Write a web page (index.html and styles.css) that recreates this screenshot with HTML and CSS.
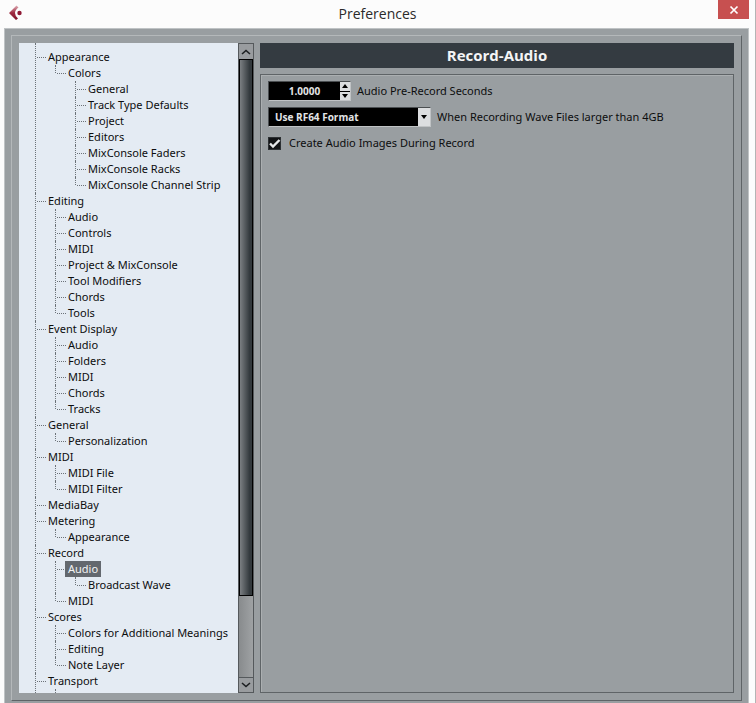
FILE: index.html
```html
<!DOCTYPE html>
<html lang="en">

<head>
    <meta charset="UTF-8">
    <meta name="viewport" content="width=device-width, initial-scale=1.0">
    <title>Preferences</title>
    <link rel="stylesheet" href="styles.css">
</head>

<body>
    <header class="titlebar">
        <svg class="logo" width="14" height="16" viewBox="0 0 14 16">
            <defs>
                <linearGradient id="red" x1="0" y1="0" x2="0" y2="1">
                    <stop offset="0" stop-color="#dfb0b8"/>
                    <stop offset="0.5" stop-color="#a02c42"/>
                    <stop offset="1" stop-color="#7d1026"/>
                </linearGradient>
            </defs>
            <path d="M7.500 0.500 L0 8 L7 15 L9 13.500 Q6 11 6 8 Q6 5 9.500 2.500 Z" fill="url(#red)"/>
            <circle cx="10.500" cy="8" r="2.200" fill="#8f1a35"/>
        </svg>
        <h1>Preferences</h1>
        <button class="close" aria-label="Close">
            <svg width="10" height="10" viewBox="0 0 10 10">
                <path d="M1.500 1.500 L8.500 8.500 M8.500 1.500 L1.500 8.500" stroke="#fff" stroke-width="1.700"/>
            </svg>
        </button>
    </header>

    <div class="window">
        <div class="frame">
            <nav class="sidebar">
                <ul class="tree">
                    <li><a href="#">Appearance</a>
                        <ul>
                            <li><a href="#">Colors</a>
                                <ul>
                                    <li><a href="#">General</a></li>
                                    <li><a href="#">Track Type Defaults</a></li>
                                    <li><a href="#">Project</a></li>
                                    <li><a href="#">Editors</a></li>
                                    <li><a href="#">MixConsole Faders</a></li>
                                    <li><a href="#">MixConsole Racks</a></li>
                                    <li><a href="#">MixConsole Channel Strip</a></li>
                                </ul>
                            </li>
                        </ul>
                    </li>
                    <li><a href="#">Editing</a>
                        <ul>
                            <li><a href="#">Audio</a></li>
                            <li><a href="#">Controls</a></li>
                            <li><a href="#">MIDI</a></li>
                            <li><a href="#">Project &amp; MixConsole</a></li>
                            <li><a href="#">Tool Modifiers</a></li>
                            <li><a href="#">Chords</a></li>
                            <li><a href="#">Tools</a></li>
                        </ul>
                    </li>
                    <li><a href="#">Event Display</a>
                        <ul>
                            <li><a href="#">Audio</a></li>
                            <li><a href="#">Folders</a></li>
                            <li><a href="#">MIDI</a></li>
                            <li><a href="#">Chords</a></li>
                            <li><a href="#">Tracks</a></li>
                        </ul>
                    </li>
                    <li><a href="#">General</a>
                        <ul>
                            <li><a href="#">Personalization</a></li>
                        </ul>
                    </li>
                    <li><a href="#">MIDI</a>
                        <ul>
                            <li><a href="#">MIDI File</a></li>
                            <li><a href="#">MIDI Filter</a></li>
                        </ul>
                    </li>
                    <li><a href="#">MediaBay</a></li>
                    <li><a href="#">Metering</a>
                        <ul>
                            <li><a href="#">Appearance</a></li>
                        </ul>
                    </li>
                    <li><a href="#">Record</a>
                        <ul>
                            <li><a href="#" class="selected">Audio</a>
                                <ul>
                                    <li><a href="#">Broadcast Wave</a></li>
                                </ul>
                            </li>
                            <li><a href="#">MIDI</a></li>
                        </ul>
                    </li>
                    <li><a href="#">Scores</a>
                        <ul>
                            <li><a href="#">Colors for Additional Meanings</a></li>
                            <li><a href="#">Editing</a></li>
                            <li><a href="#">Note Layer</a></li>
                        </ul>
                    </li>
                    <li><a href="#">Transport</a>
                        <ul>
                            <li></li>
                        </ul>
                    </li>
                </ul>
                <div class="scrollbar">
                    <button aria-label="Scroll up">
                        <svg width="10" height="6" viewBox="0 0 10 6"><path d="M1 5 L5 1.500 L9 5" fill="none" stroke="#1c1f21" stroke-width="1.600"/></svg>
                    </button>
                    <div class="thumb"></div>
                    <div class="track"></div>
                    <button aria-label="Scroll down">
                        <svg width="10" height="6" viewBox="0 0 10 6"><path d="M1 1 L5 4.500 L9 1" fill="none" stroke="#1c1f21" stroke-width="1.600"/></svg>
                    </button>
                </div>
            </nav>

            <main class="content">
                <h2>Record-Audio</h2>
                <form class="panel">
                    <div class="row">
                        <div class="field spinner">
                            <input type="text" id="preRecord" value="1.0000">
                            <div class="steps">
                                <button type="button" aria-label="Increase"><svg width="6" height="4" viewBox="0 0 6 4"><path d="M0 4 L3 0 L6 4 Z"/></svg></button>
                                <button type="button" aria-label="Decrease"><svg width="6" height="4" viewBox="0 0 6 4"><path d="M0 0 L3 4 L6 0 Z"/></svg></button>
                            </div>
                        </div>
                        <label for="preRecord">Audio Pre-Record Seconds</label>
                    </div>
                    <div class="row">
                        <div class="field dropdown">
                            <select id="waveFormat">
                                <option>Use RF64 Format</option>
                            </select>
                            <span class="arrow"><svg width="6" height="4" viewBox="0 0 6 4"><path d="M0 0 L3 4 L6 0 Z"/></svg></span>
                        </div>
                        <label for="waveFormat">When Recording Wave Files larger than 4GB</label>
                    </div>
                    <div class="row">
                        <div class="check">
                            <input type="checkbox" id="images" checked>
                            <svg width="13" height="13" viewBox="0 0 13 13"><path d="M2 6.500 L5 9.500 L11.500 3" fill="none" stroke="#e4e6e8" stroke-width="2.400"/></svg>
                        </div>
                        <label for="images">Create Audio Images During Record</label>
                    </div>
                </form>
            </main>
        </div>
    </div>
</body>

</html>
```

FILE: styles.css
```css
* {
    box-sizing: border-box;
}

body {
    margin: 0;
    height: 100vh;
    display: flex;
    flex-direction: column;
    background-color: #fcfcfc;
    border-right: 1px solid #b4b4b4;
    font-family: "Noto Sans", "Open Sans", sans-serif;
    font-size: 11px;
    color: #0c0d0e;
    overflow: hidden;
}

button {
    display: flex;
    align-items: center;
    justify-content: center;
    margin: 0;
    padding: 0;
    border: 0;
}

ul {
    list-style: none;
    margin: 0;
    padding: 0;
}

/* title bar */
.titlebar {
    position: relative;
    flex: none;
    height: 28px;
    display: flex;
    justify-content: center;
}

.titlebar h1 {
    margin: 0;
    font-family: "Open Sans", sans-serif;
    font-size: 14px;
    line-height: 28px;
    font-weight: normal;
    color: #2a2a2a;
}

.logo {
    position: absolute;
    left: 9px;
    top: 5px;
}

.close {
    position: absolute;
    right: 6px;
    top: 0;
    width: 31px;
    height: 19px;
    background-color: #c75050;
}

/* window body */
.window {
    flex: 1;
    min-height: 0;
    margin: 0 6px 0 4px;
    padding: 6px 6px 2px;
    display: flex;
    background-color: #999ea1;
    border: 1px solid #bfc3c5;
    border-bottom: 0;
}

.frame {
    flex: 1;
    min-width: 0;
    display: flex;
    gap: 6px;
    padding: 7px;
    border: 1px solid;
    border-color: #b4b8ba #5f6467 #5f6467 #b4b8ba;
}

/* tree */
.sidebar {
    flex: none;
    width: 235px;
    display: flex;
}

.tree {
    flex: 1;
    padding: 6px 0 0 16px;
    background-color: #e4ebf3;
    overflow: hidden;
}

.tree li {
    position: relative;
    padding-left: 10px;
    min-height: 16px;
}

.tree ul {
    margin-left: 10px;
}

.tree li::before {
    content: "";
    position: absolute;
    left: 0;
    top: 0;
    bottom: 0;
    border-left: 1px dotted #6c7278;
}

.tree li::after {
    content: "";
    position: absolute;
    left: 2px;
    top: 8px;
    width: 9px;
    border-top: 1px dotted #6c7278;
}

.tree ul li:last-child::before {
    bottom: auto;
    height: 8px;
}

.tree > li:first-child::before {
    top: -6px;
}

.tree a {
    position: relative;
    z-index: 1;
    display: block;
    width: max-content;
    height: 16px;
    line-height: 16px;
    padding: 0 3px;
    color: #0c0d0e;
    text-decoration: none;
    white-space: nowrap;
}

.tree a.selected {
    background-color: #63686e;
    color: #f2f3f4;
}

.scrollbar {
    width: 16px;
    display: flex;
    flex-direction: column;
    border: 1px solid #55595c;
    background-color: #999ea1;
}

.scrollbar button {
    flex: none;
    height: 15px;
    background-color: #999c9f;
}

.scrollbar button:last-child {
    border-top: 1px solid #55595c;
}

.thumb {
    flex: 538;
    border: 1px solid #000;
    background: linear-gradient(to right, #7b7f82, #33393d 80%);
}

.track {
    flex: 81;
    background: linear-gradient(to right, #888b8d, #9fa2a4);
}

/* settings */
.content {
    flex: 1;
    min-width: 0;
    display: flex;
    flex-direction: column;
    gap: 6px;
}

.content h2 {
    margin: 0;
    height: 25px;
    line-height: 25px;
    text-align: center;
    font-family: "Open Sans", sans-serif;
    font-size: 15px;
    font-weight: bold;
    background-color: #343b41;
    color: #f4f5f6;
}

.panel {
    flex: 1;
    margin: 0;
    padding: 6px;
    display: flex;
    flex-direction: column;
    gap: 6px;
    border: 1px solid #5f6467;
    box-shadow: inset 1px 1px #abafb1;
}

.row {
    display: flex;
    align-items: center;
    gap: 6px;
    height: 20px;
    padding-left: 1px;
}

.row label {
    line-height: 20px;
}

.field {
    display: flex;
    height: 20px;
    border: 1px solid;
    border-color: #4b4f52 #c0c3c5 #c0c3c5 #4b4f52;
    background-color: #000;
}

.field input,
.field select {
    flex: 1;
    min-width: 0;
    margin: 0;
    padding: 0;
    border: 0;
    appearance: none;
    background-color: #000;
    color: #e2e4e6;
    font-family: "Open Sans", sans-serif;
    font-size: 10px;
    font-weight: bold;
}

.field select {
    padding-left: 6px;
}

.spinner {
    width: 83px;
}

.spinner input {
    text-align: center;
}

.steps {
    width: 10px;
    display: flex;
    flex-direction: column;
    gap: 1px;
}

.steps button {
    flex: 1;
    background-color: #dcdee0;
}

.dropdown {
    position: relative;
    width: 163px;
}

.arrow {
    position: absolute;
    right: 0;
    top: 0;
    bottom: 0;
    width: 12px;
    display: flex;
    align-items: center;
    justify-content: center;
    background-color: #dcdee0;
    pointer-events: none;
}

.check {
    position: relative;
    width: 15px;
    height: 13px;
}

.check input {
    display: block;
    appearance: none;
    margin: 0;
    width: 13px;
    height: 13px;
    background-color: #111315;
    border: 1px solid #2c3033;
}

.check svg {
    position: absolute;
    left: 0;
    top: 0;
    pointer-events: none;
}
```
